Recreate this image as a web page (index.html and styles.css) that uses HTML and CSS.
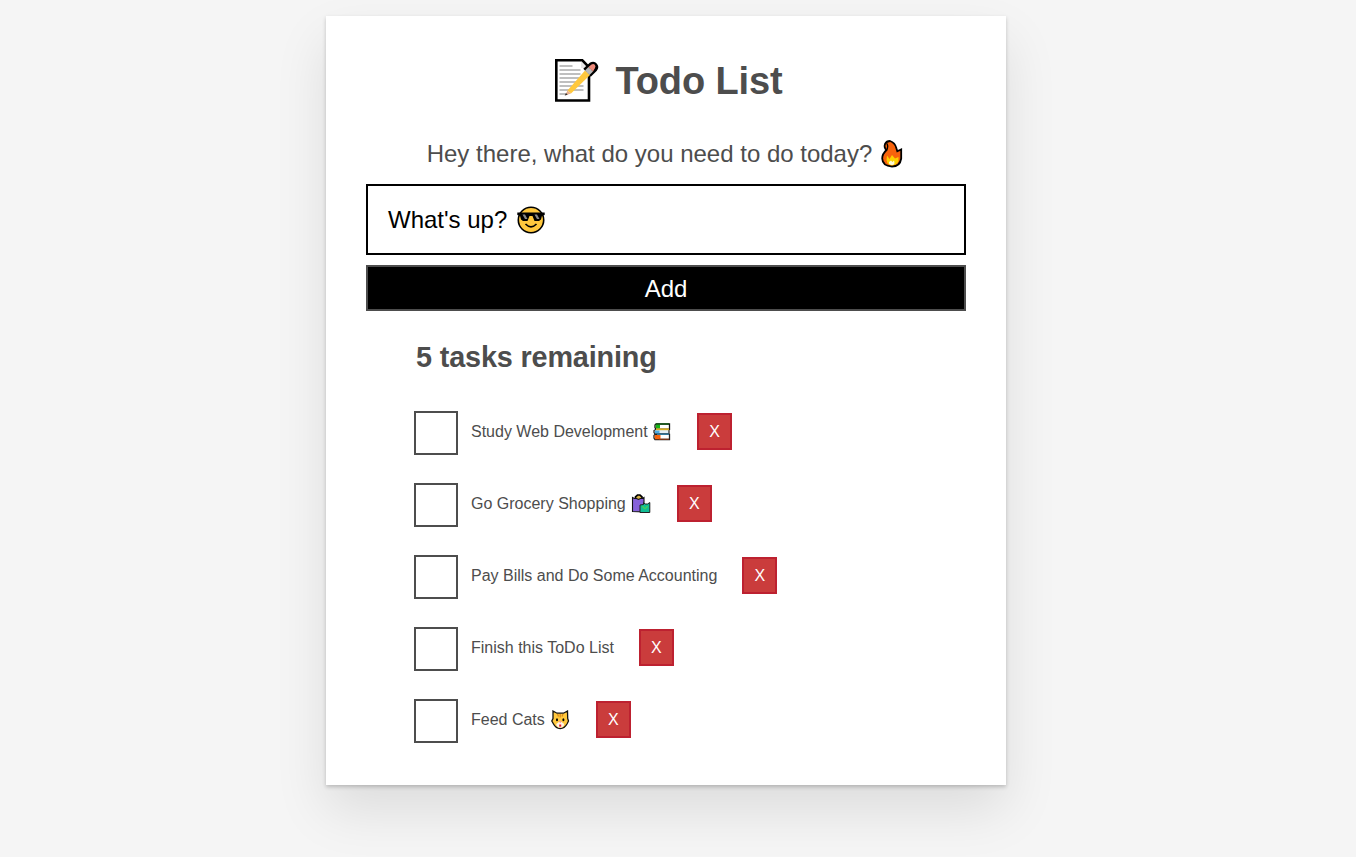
FILE: index.html
```html
<!DOCTYPE html>
<html lang="en">
<head>
<meta charset="utf-8">
<title>Todo List</title>
<link rel="stylesheet" href="styles.css">
</head>
<body>
<main class="card">
  <h1 class="title">
    <svg class="icon-memo" viewBox="0 0 46 46" aria-hidden="true">
      <path d="M3.300 3.300h26l6.700 7v33.200H3.300z" fill="#fff" stroke="#000" stroke-width="2.600"/>
      <path d="M28 4.500v6.500h6.700z" fill="#e6e6e6"/>
      <path d="M6.500 9h13M6.500 13h21M6.500 17h21M6.500 21h21M6.500 25h22M6.500 29h24M6.500 33h24M6.500 37h7" stroke="#aaa" stroke-width="1.700"/>
      <path d="M32 13.500l6-5.500q2.500-1.500 4 .3t0 3.700L36 18" fill="none" stroke="#000" stroke-width="5"/>
      <path d="M14.500 33.500L32 13.500l5 4.500-19 18.500z" fill="#ffc83d"/>
      <path d="M14.500 33.500l3.500 3-6 2z" fill="#e9b18e"/>
      <path d="M13 36l1.700 1.700-3 .8z" fill="#333"/>
      <path d="M32 13.500l3.500-3.500 4.500 4.500-3.500 3.500z" fill="#b9b9b9"/>
      <path d="M35.500 10l3-2.500q2-1 3.300.3t.2 3.200L40 14.500z" fill="#ef8b7b"/>
    </svg>
    <span class="title-text">Todo List</span>
  </h1>
  <form class="form">
    <label class="question" for="new-task">
      <span>Hey there, what do you need to do today?</span>
      <svg class="icon-fire" viewBox="0 0 22 28" aria-hidden="true">
        <path d="M5.500 10Q2.700 7.500 4 4Q5.500 1 9 1Q14 2.500 15.500 8.500L16.300 11.300L20.200 9.500V18.500Q19 26.500 11 26.500Q1.500 26 1.200 18.500Q1.200 14 5.500 10z" fill="#f7630c" stroke="#000" stroke-width="1.800"/>
        <path d="M6.200 9.500Q7.500 6 6 3.500" fill="none" stroke="#000" stroke-width="1.400"/>
        <path d="M6 15.500l2.500 3.500 2.500-4 3 3.500 3.500-1.500q1 8-6.500 8.500Q4 24.500 6 15.500z" fill="#fcd000"/>
        <path d="M8 22l2-1.500 1.500 1.500 1.500-1.500q1.500 4.500-2 4.500t-3-3z" fill="#fffbd5"/>
      </svg>
    </label>
    <div class="field" id="new-task">
      <span>What's up?</span>
      <svg class="icon-cool" viewBox="0 0 28 28" aria-hidden="true">
        <circle cx="14" cy="14" r="12.700" fill="#ffc83d" stroke="#000" stroke-width="1.600"/>
        <path d="M.3 6.500h27.400v2.500l-2.700.7-1 3.800-2 1.500h-4.500l-2-5h-3l-2 5H6l-2-1.500-1-3.800-2.700-.7z" fill="#000"/>
        <path d="M5.500 8.500h2.500l2.500 4.500H8zM17.500 8.500H20l2.500 4.500H20z" fill="#888"/>
        <path d="M8.500 18q5.500 5.500 11 0" fill="none" stroke="#000" stroke-width="1.700"/>
      </svg>
    </div>
    <button class="add" type="button">Add</button>
  </form>
  <section class="tasks">
    <h2 class="count">5 tasks remaining</h2>
    <ul class="list">
      <li class="task">
        <span class="box"></span>
        <span class="name">Study Web Development</span>
        <svg class="icon-small icon-books" viewBox="0 0 20 20" aria-hidden="true">
          <path d="M4 2h13.500v5.300H4L3 5.500V3z" fill="#fff" stroke="#111" stroke-width="1.300"/>
          <path d="M3.500 2.500H8v4H4z" fill="#16b515"/><path d="M4 2h13" stroke="#135c18" stroke-width="1.500"/>
          <path d="M4 7.300h13v4.500H3L2 10.500v-2z" fill="#e3eef5" stroke="#222" stroke-width="1.200"/>
          <path d="M3 8.500h4.500v3H3z" fill="#4aaee8"/><path d="M4 7.300h13" stroke="#d5ad24" stroke-width="1.800"/>
          <path d="M3 12.400h14.500V17.500H3l-1-1.500v-2.500z" fill="#fff" stroke="#222" stroke-width="1.300"/>
          <path d="M2.500 13h6v4.200H3z" fill="#f7630c"/><path d="M5 12.200h12" stroke="#347ca3" stroke-width="1.500"/>
          <path d="M7 17.200h10" stroke="#9b3e15" stroke-width="1"/>
        </svg>
        <button class="remove" type="button">X</button>
      </li>
      <li class="task">
        <span class="box"></span>
        <span class="name">Go Grocery Shopping</span>
        <svg class="icon-small" viewBox="0 0 20 20" aria-hidden="true">
          <path d="M4.500 5V2.800L6.500 1h2.500l2 1.800V5" fill="#d9b34a" stroke="#000" stroke-width="1.700"/>
          <path d="M1.500 3.500L3.500 4.500h2l2 1 2-1h2l1.500-1v14.500l-11.500-.5z" fill="#8661d9" stroke="#111" stroke-width="1.100"/>
          <path d="M9 11l3.500-.5V8.500l1.500 1.500h2.500L18.800 8.500v10H9z" fill="#10bd94" stroke="#222" stroke-width="1"/>
          <path d="M11.500 12q2.500 5 5 0" fill="none" stroke="#47cf55" stroke-width="1.500"/>
        </svg>
        <button class="remove remove-wide" type="button">X</button>
      </li>
      <li class="task">
        <span class="box"></span>
        <span class="name">Pay Bills and Do Some Accounting</span>
        <button class="remove" type="button">X</button>
      </li>
      <li class="task">
        <span class="box"></span>
        <span class="name">Finish this ToDo List</span>
        <button class="remove" type="button">X</button>
      </li>
      <li class="task">
        <span class="box"></span>
        <span class="name">Feed Cats</span>
        <svg class="icon-small" viewBox="0 0 20 20" aria-hidden="true">
          <path d="M3 1l4 2.200h6.500L17.500 1l.2 7.500.8 2.500-1.500 3q-2.500 4.500-6.800 4.500T3.500 14l-1.700-3L3 8.500z" fill="#ffc83d" stroke="#111" stroke-width="1.300"/>
          <path d="M10.200 4v3.500M7.500 4l1 2.500M13 4l-1 2.500" stroke="#d88719" stroke-width="1.200"/>
          <path d="M10.200 11l4 3q-.5 3.800-4 3.800t-4-3.800z" fill="#fff3e2"/>
          <ellipse cx="7" cy="9.800" rx="1" ry="1.500"/><ellipse cx="13.400" cy="9.800" rx="1" ry="1.500"/>
          <path d="M8.700 11.300h3L10.200 13z" fill="#f47d86"/><path d="M9.200 14.500h2v2.200h-2z" fill="#e81224"/>
        </svg>
        <button class="remove remove-wide" type="button">X</button>
      </li>
    </ul>
  </section>
</main>
</body>
</html>
```
FILE: styles.css
```css
* { box-sizing: border-box; }
body {
  margin: 0;
  min-height: 857px;
  padding-top: 16px;
  background: #f5f5f5;
  color: #4d4d4d;
  font-family: "Liberation Sans", Arial, sans-serif;
  overflow: hidden;
}
.card {
  width: 680px;
  height: 769px;
  margin-left: 326px;
  padding: 40px;
  background: #fff;
  box-shadow: 0 2px 4px 0 rgba(0, 0, 0, .2), 0 25px 50px 0 rgba(0, 0, 0, .1);
}
.title {
  display: flex;
  align-items: center;
  justify-content: center;
  gap: 16px;
  height: 48px;
  margin: 0 0 34px;
  padding-left: 4px;
  font-size: 38px;
  letter-spacing: -.1px;
  line-height: 48px;
}
.title-text { padding-top: 2px; }
.icon-memo { width: 46px; height: 46px; }
.form { display: flex; flex-direction: column; }
.question {
  display: flex;
  align-items: center;
  justify-content: center;
  gap: 9px;
  height: 32px;
  margin-bottom: 14px;
  padding-right: 2px;
  font-size: 24px;
}
.icon-fire { width: 22px; height: 28px; }
.field {
  display: flex;
  align-items: center;
  gap: 9.500px;
  height: 71px;
  padding: 0 20px;
  border: 2px solid #000;
  color: #000;
  font-size: 24px;
}
.icon-cool { width: 28px; height: 28px; }
.add {
  height: 46px;
  margin-top: 10px;
  padding: 2px 0 0;
  border: 2px solid #4d4d4d;
  background: #000;
  color: #fff;
  font: 24px "Liberation Sans", Arial, sans-serif;
}
.tasks { padding: 28px 0 0 48px; }
.count {
  margin: 0 0 35px 2px;
  font-size: 28.8px;
  letter-spacing: -.15px;
  line-height: 37px;
}
.list {
  display: grid;
  gap: 28px;
  margin: 0;
  padding: 0;
  list-style: none;
}
.task { display: flex; height: 44px; }
.box { width: 44px; height: 44px; border: 2px solid #4d4d4d; }
.name { margin-left: 13px; font-size: 16px; line-height: 41px; }
.icon-small { width: 20px; height: 20px; margin: 11px 0 0 5px; }
.icon-books { margin-left: 4.400px; }
.remove {
  width: 35px;
  height: 37px;
  margin: 2px 0 0 25px;
  padding: 0;
  border: 2px solid #bd2130;
  background: #ca3c3c;
  color: #fff;
  font: 16px "Liberation Sans", Arial, sans-serif;
}
.remove-wide { margin-left: 26px; }
```
